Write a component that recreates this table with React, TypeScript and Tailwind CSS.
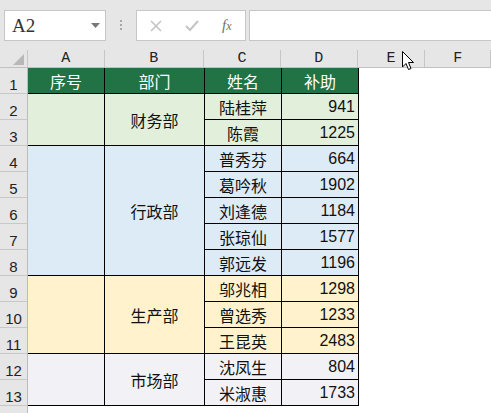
import * as React from 'react'

const CJK = "[font-family:'Noto_Sans_CJK_SC',sans-serif]"
const NUM = "[font-family:'Liberation_Sans',sans-serif]"

interface Person {
  name: string
  amount: number
}

interface Group {
  dept: string
  bg: string
  people: Person[]
}

const GROUPS: Group[] = [
  {
    dept: '财务部',
    bg: 'bg-[#e2efda]',
    people: [
      { name: '陆桂萍', amount: 941 },
      { name: '陈霞', amount: 1225 },
    ],
  },
  {
    dept: '行政部',
    bg: 'bg-[#ddebf7]',
    people: [
      { name: '普秀芬', amount: 664 },
      { name: '葛吟秋', amount: 1902 },
      { name: '刘逢德', amount: 1184 },
      { name: '张琼仙', amount: 1577 },
      { name: '郭远发', amount: 1196 },
    ],
  },
  {
    dept: '生产部',
    bg: 'bg-[#fff2cc]',
    people: [
      { name: '邬兆相', amount: 1298 },
      { name: '曾选秀', amount: 1233 },
      { name: '王昆英', amount: 2483 },
    ],
  },
  {
    dept: '市场部',
    bg: 'bg-[#f2f2f6]',
    people: [
      { name: '沈凤生', amount: 804 },
      { name: '米淑惠', amount: 1733 },
    ],
  },
]

const COLUMNS = [
  { label: 'A', w: 'w-[77px]' },
  { label: 'B', w: 'w-[100px]' },
  { label: 'C', w: 'w-[77px]' },
  { label: 'D', w: 'w-[77px]' },
  { label: 'E', w: 'w-[68px]' },
  { label: 'F', w: 'w-[66px]' },
]

export default function App() {
  return (
    <div className="relative h-[413px] w-[491px] overflow-hidden bg-white">
      <Toolbar />
      <ColumnHeaders />
      <div className="flex">
        <RowHeaders />
        <Sheet />
      </div>
      <Cursor />
    </div>
  )
}

function Toolbar() {
  return (
    <div className="flex h-[50px] items-start bg-[#e6e6e6] pt-[10px]">
      <div className="ml-[4px] flex h-[31px] w-[102px] items-center border border-[#c6c6c6] bg-white pl-[7px] pr-[5px]">
        <span className="flex-1 [font-family:'Liberation_Serif',serif] text-[19px] leading-none text-[#333]">
          A2
        </span>
        <svg width="9" height="5" viewBox="0 0 9 5">
          <path d="M0 0 L9 0 L4.5 5 Z" fill="#777" />
        </svg>
      </div>
      <div className="flex w-[30px] flex-col items-center gap-[2px] pt-[10px]">
        <span className="h-[2px] w-[2px] bg-[#a8a8a8]" />
        <span className="h-[2px] w-[2px] bg-[#a8a8a8]" />
        <span className="h-[2px] w-[2px] bg-[#a8a8a8]" />
      </div>
      <div className="flex h-[31px] w-[110px] items-center border border-[#c6c6c6] bg-white">
        <svg className="ml-[13px]" width="12" height="12" viewBox="0 0 12 12">
          <path d="M1 1 L11 11 M11 1 L1 11" stroke="#c4c4c4" strokeWidth="1.6" />
        </svg>
        <svg className="ml-[23px]" width="14" height="12" viewBox="0 0 14 12">
          <path d="M1 6 L5 10 L13 1" fill="none" stroke="#c4c4c4" strokeWidth="2" />
        </svg>
        <span className="ml-[23px] [font-family:'Liberation_Serif',serif] text-[15px] italic text-[#707070]">
          f<span className="text-[12px]">x</span>
        </span>
      </div>
      <div className="ml-[3px] h-[31px] flex-1 border-y border-l border-[#c6c6c6] bg-white" />
    </div>
  )
}

function ColumnHeaders() {
  return (
    <div className="flex h-[18px] border-b border-[#c0c0c0] bg-[#e6e6e6]">
      <div className="relative w-[28px] border-r border-[#c6c6c6]">
        <svg className="absolute bottom-[2px] right-[3px]" width="11" height="11" viewBox="0 0 11 11">
          <path d="M11 0 L11 11 L0 11 Z" fill="#b8b8b8" />
        </svg>
      </div>
      {COLUMNS.map((c) => (
        <div
          key={c.label}
          className={`${c.w} flex items-center justify-center border-r border-[#c6c6c6] [font-family:'Liberation_Mono',monospace] text-[15px] leading-none text-[#222]`}
        >
          {c.label}
        </div>
      ))}
    </div>
  )
}

function RowHeaders() {
  const rows = Array.from({ length: 13 }, (_, i) => i + 1)
  return (
    <div className="flex w-[28px] shrink-0 flex-col border-r border-[#bcbcbc] bg-[#e6e6e6]">
      {rows.map((n) => (
        <div
          key={n}
          className={`flex h-[26px] items-end justify-center border-b border-[#c8c8c8] pb-[1px] ${NUM} text-[15px] leading-none text-[#222]`}
        >
          {n}
        </div>
      ))}
      <div className="h-[20px]" />
    </div>
  )
}

function Sheet() {
  return (
    <div className={`flex flex-col ${CJK} text-[16px] text-[#111]`}>
      <div className="flex h-[26px] bg-[#217346] text-white">
        <HeadCell w="w-[77px]">序号</HeadCell>
        <HeadCell w="w-[100px]">部门</HeadCell>
        <HeadCell w="w-[77px]">姓名</HeadCell>
        <HeadCell w="w-[77px]">补助</HeadCell>
      </div>
      {GROUPS.map((g) => (
        <div key={g.dept} className={`flex ${g.bg}`}>
          <div className="w-[77px] border-b border-r border-black" />
          <div className="flex w-[100px] items-center justify-center border-b border-r border-black">
            {g.dept}
          </div>
          <div className="flex flex-col">
            {g.people.map((p) => (
              <div key={p.name} className="flex h-[26px]">
                <div className="flex w-[77px] items-center justify-center border-b border-r border-black">
                  {p.name}
                </div>
                <div className={`flex w-[77px] items-center justify-end border-b border-r border-black pr-[3px] ${NUM}`}>
                  {p.amount}
                </div>
              </div>
            ))}
          </div>
        </div>
      ))}
    </div>
  )
}

function HeadCell({ w, children }: { w: string; children: React.ReactNode }) {
  return (
    <div className={`${w} flex items-center justify-center border-b border-r border-black`}>
      {children}
    </div>
  )
}

function Cursor() {
  return (
    <svg
      className="absolute left-[402px] top-[51px]"
      width="14"
      height="21"
      viewBox="0 0 14 21"
    >
      <path
        d="M0.5 0.5 L0.5 16 L4 12.5 L6.5 18.5 L9 17.5 L6.5 11.5 L11.5 11.5 Z"
        fill="white"
        stroke="black"
        strokeWidth="1"
        strokeLinejoin="round"
      />
    </svg>
  )
}
